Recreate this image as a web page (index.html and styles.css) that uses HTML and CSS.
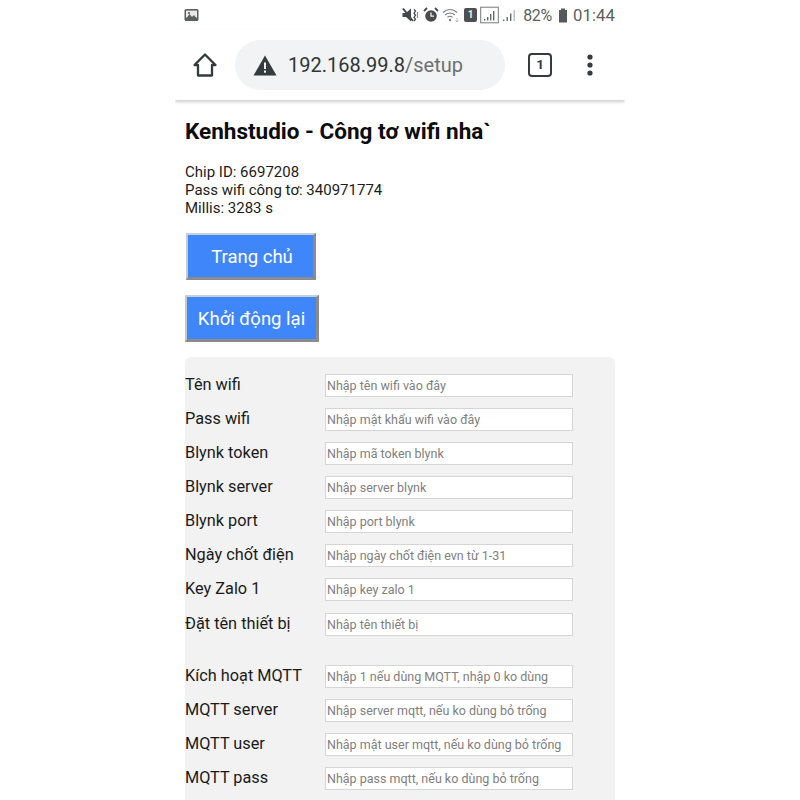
FILE: index.html
```html
<!DOCTYPE html>
<html lang="vi">
<head>
<meta charset="utf-8">
<title>Setup</title>
<link rel="stylesheet" href="styles.css">
</head>
<body>
<div class="phone">
  <div class="status">
    <svg class="ic-pic" width="15" height="14" viewBox="0 0 15 14"><rect x="0.5" y="1" width="14" height="12" rx="1.5" fill="#5b5f60"/><rect x="2" y="2.6" width="11" height="7" fill="#e8e9e9"/><path d="M2 11l3.5-5 2.500 3 2-2 3 4z" fill="#5b5f60"/><circle cx="5" cy="5" r="1.1" fill="#5b5f60"/></svg>
    <div class="status-right">
      <svg width="18" height="16" viewBox="0 0 18 16"><path d="M0.500 6h3.500l5-4.500v13l-5-4.500H0.500z" fill="#45494a"/><path d="M1 1.500l10 12.500" stroke="#45494a" stroke-width="2"/><path d="M12 2.500l1.500 1.500-1.500 2.200 1.500 2-1.500 2 1.500 2-1.500 1.800" fill="none" stroke="#45494a" stroke-width="1.300"/><path d="M15.500 5v6" stroke="#8a8d8e" stroke-width="1.200"/></svg>
      <svg width="16" height="16" viewBox="0 0 16 16"><circle cx="8" cy="9" r="5.8" fill="#484c4d"/><path d="M8 5.600v3.600h3" fill="none" stroke="#f2f2f2" stroke-width="1.300"/><path d="M1 4l3-3M15 4l-3-3" stroke="#484c4d" stroke-width="1.800"/></svg>
      <svg width="19" height="16" viewBox="0 0 19 16"><path d="M1 5.500c4-4 10-4 14 0M3.200 8c2.800-2.600 6.800-2.600 9.600 0M5.400 10.400c1.600-1.400 3.600-1.400 5.200 0" fill="none" stroke="#7d8182" stroke-width="1.100"/><circle cx="8" cy="13" r="1.200" fill="#7d8182"/><path d="M15 11v4M13.500 13.500l1.500 1.500 1.500-1.500" fill="none" stroke="#a5a8a9" stroke-width="0.800"/></svg>
      <span class="sim">1</span>
      <svg width="19" height="18" viewBox="0 0 19 18"><rect x="0.700" y="1.200" width="17.600" height="15.600" fill="none" stroke="#77797a" stroke-width="1"/><path d="M4 14.500h1.400v-1.500H4zM7 14.500h1.400v-3.500H7zM10 14.500h1.400v-6.500H10zM13 14.500h1.400v-9.500H13z" fill="#66696a"/></svg>
      <svg width="16" height="14" viewBox="0 0 16 14"><path d="M1 13h1.400v-1.500H1zM4.500 13h1.400v-4H4.500zM8 13h1.400V5.500H8z" fill="#66696a"/><path d="M11.500 13h1.400V2h-1.400z" fill="#b5b7b8"/></svg>
      <span class="pct">82%</span>
      <svg class="batt" width="10" height="15" viewBox="0 0 10 15"><path d="M3 0.500h4v1.500h2v12.500H1V2h2z" fill="#55595a"/></svg>
      <span class="clock">01:44</span>
    </div>
  </div>

  <div class="toolbar">
    <svg class="home" width="26" height="26" viewBox="0 0 26 26"><path d="M13 2.500L2.500 13H6v10.500h14V13h3.500z" fill="none" stroke="#333b3e" stroke-width="2.300" stroke-linejoin="round"/></svg>
    <div class="omnibox">
      <svg width="24" height="21" viewBox="0 0 24 21"><path d="M12 0.500L23.500 20.500H0.500z" fill="#333b3e"/><rect x="11" y="7.500" width="2" height="6.500" fill="#f1f3f4"/><rect x="11" y="15.500" width="2" height="2.200" fill="#f1f3f4"/></svg>
      <span class="url">192.168.99.8<span class="path">/setup</span></span>
    </div>
    <span class="tabs">1</span>
    <svg class="menu" width="8" height="24" viewBox="0 0 8 24"><circle cx="4" cy="4" r="2.600" fill="#333b3e"/><circle cx="4" cy="12" r="2.600" fill="#333b3e"/><circle cx="4" cy="20" r="2.600" fill="#333b3e"/></svg>
  </div>

  <main class="content">
    <h1 class="title">Kenhstudio - Công tơ wifi nha`</h1>
    <p class="info">Chip ID: 6697208<br>Pass wifi công tơ: 340971774<br>Millis: 3283 s</p>
    <div class="actions">
      <button class="btn btn-home" type="button">Trang chủ</button>
      <button class="btn btn-reset" type="button">Khởi động lại</button>
    </div>
    <form class="panel">
      <div class="group">
        <label class="row"><span class="lbl">Tên wifi</span><input class="field" placeholder="Nhập tên wifi vào đây"></label>
        <label class="row"><span class="lbl">Pass wifi</span><input class="field" placeholder="Nhập mật khẩu wifi vào đây"></label>
        <label class="row"><span class="lbl">Blynk token</span><input class="field" placeholder="Nhập mã token blynk"></label>
        <label class="row"><span class="lbl">Blynk server</span><input class="field" placeholder="Nhập server blynk"></label>
        <label class="row"><span class="lbl">Blynk port</span><input class="field" placeholder="Nhập port blynk"></label>
        <label class="row"><span class="lbl">Ngày chốt điện</span><input class="field" placeholder="Nhập ngày chốt điện evn từ 1-31"></label>
        <label class="row"><span class="lbl">Key Zalo 1</span><input class="field" placeholder="Nhập key zalo 1"></label>
        <label class="row"><span class="lbl">Đặt tên thiết bị</span><input class="field" placeholder="Nhập tên thiết bị"></label>
      </div>
      <div class="group">
        <label class="row"><span class="lbl">Kích hoạt MQTT</span><input class="field" placeholder="Nhập 1 nếu dùng MQTT, nhập 0 ko dùng"></label>
        <label class="row"><span class="lbl">MQTT server</span><input class="field" placeholder="Nhập server mqtt, nếu ko dùng bỏ trống"></label>
        <label class="row"><span class="lbl">MQTT user</span><input class="field" placeholder="Nhập mật user mqtt, nếu ko dùng bỏ trống"></label>
        <label class="row"><span class="lbl">MQTT pass</span><input class="field" placeholder="Nhập pass mqtt, nếu ko dùng bỏ trống"></label>
      </div>
    </form>
  </main>
</div>
</body>
</html>
```
FILE: styles.css
```css
* { box-sizing: border-box; }
html, body { margin: 0; height: 100%; overflow: hidden; background: #fff; }
body { font-family: Roboto, "Noto Sans", sans-serif; color: #111; }
.phone { width: 450px; height: 800px; margin: 0 auto; overflow: hidden; }

.status { height: 30px; display: flex; align-items: center; justify-content: space-between; padding: 0 10px 0 9px; color: #5b5f60; }
.status-right { display: flex; align-items: center; gap: 3px; }
.sim { width: 13px; height: 14px; border-radius: 2px; background: #4c5051; color: #eee; font-size: 10px; font-weight: 700; text-align: center; line-height: 14px; }
.pct { font-size: 16px; margin-left: 2px; letter-spacing: -0.300px; }
.batt { margin: 0 2px 0 3px; }
.clock { font-size: 16.700px; letter-spacing: 0.100px; }

.toolbar { height: 70px; display: flex; align-items: center; padding: 0 0 0 17px; box-shadow: 0 2px 3px #cfcfcf; position: relative; }
.home { flex: none; }
.omnibox { width: 270px; height: 50px; margin-left: 17px; padding-left: 18px; border-radius: 25px; background: #f1f3f4; display: flex; align-items: center; gap: 11px; }
.url { font-size: 20px; color: #2f3538; }
.path { color: #6b7073; }
.tabs { width: 24px; height: 24px; margin-left: 23px; border: 2.400px solid #333b3e; border-radius: 4px; font-size: 13.500px; font-weight: 700; color: #333b3e; text-align: center; line-height: 19px; }
.menu { margin-left: 34px; }

.content { padding: 0 10px; }
.title { margin: 0; padding-top: 18px; padding-bottom: 1px; font-size: 22.500px; line-height: 26px; font-weight: 700; color: #0c0c0c; }
.info { margin: 18px 0 0; font-size: 15px; line-height: 18px; color: #1c1c1c; }

.actions { display: flex; flex-direction: column; align-items: flex-start; gap: 15px; margin-top: 16px; padding-left: 1px; }
.btn { height: 47px; background: #3f86fb; color: #fff; font: 400 18.500px Roboto, sans-serif; border-style: solid; border-width: 2px 3px 3px 2px; border-color: #c9cfd6 #8b8b8b #8b8b8b #c4c9d0; padding: 1px 0 0; }
.btn-home { width: 130px; padding-left: 3px; }
.btn-reset { width: 134px; margin-left: -1px; }

.panel { margin-top: 15px; background: #f2f2f2; border-radius: 6px; padding: 11px 0 0; height: 460px; }
.group + .group { margin-top: 18px; }
.row { display: flex; align-items: center; height: 34.150px; }
.lbl { width: 140px; font-size: 16.300px; color: #1a1a1a; position: relative; top: -1px; }
.field { width: 248px; height: 23px; padding: 0 1px; background: #fff; border: 1px solid #d5d5d5; font: 400 12.500px Roboto, sans-serif; outline: none; }
.field::placeholder { color: #808080; opacity: 1; }
```
